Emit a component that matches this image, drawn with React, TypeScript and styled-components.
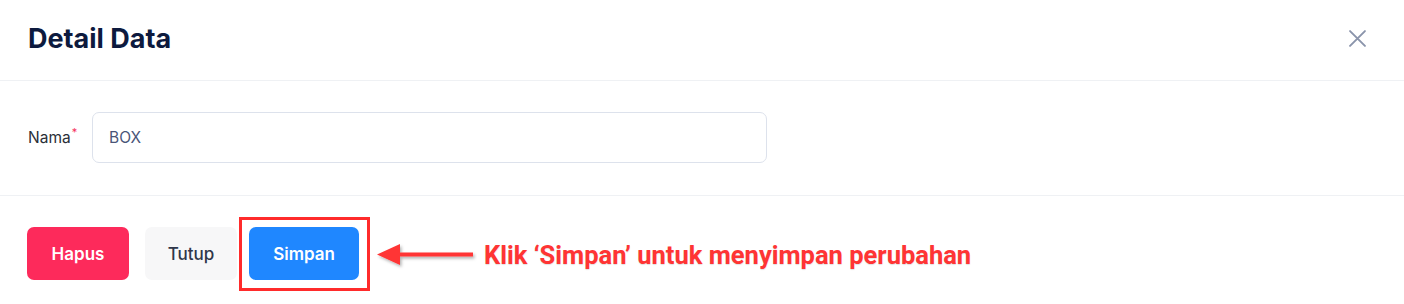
import styled, { createGlobalStyle } from "styled-components";

const GlobalStyle = createGlobalStyle`
  html, body {
    margin: 0;
    padding: 0;
    background: #ffffff;
  }
  body {
    font-family: Inter, "Noto Sans", sans-serif;
  }
`;

const Modal = styled.div`
  width: 1404px;
  height: 304px;
  background: #ffffff;
  display: flex;
  flex-direction: column;
`;

const Header = styled.div`
  height: 81px;
  box-sizing: border-box;
  padding: 0 38px 3px 28px;
  display: flex;
  align-items: center;
  justify-content: space-between;
  border-bottom: 1px solid #eff1f4;
`;

const Title = styled.h2`
  margin: 0;
  font-size: 27px;
  font-weight: 700;
  color: #0d1a3e;
`;

const CloseButton = styled.button`
  border: none;
  background: none;
  padding: 0;
  width: 18px;
  height: 18px;
  display: flex;
  align-items: center;
  justify-content: center;
  cursor: pointer;
`;

const Body = styled.div`
  padding: 31px 28px 32px 28px;
  border-bottom: 1px solid #eff1f4;
`;

const Field = styled.div`
  display: flex;
  align-items: center;
`;

const Label = styled.label`
  width: 64px;
  font-size: 15.5px;
  color: #2b2f38;
  display: flex;
  align-items: flex-start;
`;

const Required = styled.span`
  color: #f5325c;
  font-size: 11px;
  margin-left: 1px;
  margin-top: -3px;
`;

const Input = styled.input`
  width: 675px;
  height: 51px;
  box-sizing: border-box;
  border: 1px solid #dde2ec;
  border-radius: 7px;
  padding: 0 16px;
  font-family: Inter, "Noto Sans", sans-serif;
  font-size: 15.5px;
  color: #4a5578;
  outline: none;
`;

const Footer = styled.div`
  padding: 31px 27px 0 27px;
  display: flex;
  align-items: center;
`;

const Button = styled.button<{ $variant: "danger" | "plain" | "primary" }>`
  height: 53px;
  border: none;
  border-radius: 7px;
  font-family: Inter, "Noto Sans", sans-serif;
  font-size: 17px;
  font-weight: ${(p) => (p.$variant === "plain" ? 500 : 600)};
  cursor: pointer;
  background: ${(p) =>
    p.$variant === "danger" ? "#fd2a5b" : p.$variant === "primary" ? "#1f87ff" : "#f7f7f8"};
  color: ${(p) => (p.$variant === "plain" ? "#2f364a" : "#ffffff")};
`;

const Hapus = styled(Button)`
  width: 102px;
`;

const Tutup = styled(Button)`
  width: 92px;
  margin-left: 16px;
`;

const Simpan = styled(Button)`
  width: 110px;
`;

const Highlight = styled.div`
  position: relative;
  margin-left: 12px;
  display: flex;

  &::after {
    content: "";
    position: absolute;
    left: -10px;
    right: -11px;
    top: -10px;
    bottom: -11px;
    border: 3px solid #ff2b2b;
    pointer-events: none;
  }
`;

const Hint = styled.div`
  display: flex;
  align-items: center;
  margin-left: 18px;
  margin-top: 2px;
`;

const HintText = styled.span`
  font-family: Roboto, "Liberation Sans", sans-serif;
  font-size: 25.5px;
  font-weight: 700;
  color: #ff3434;
  margin-left: 7px;
  text-shadow: 0 1px 1px rgba(0, 0, 0, 0.12);
`;

export default function App() {
  return (
    <>
      <GlobalStyle />
      <Modal>
        <Header>
          <Title>Detail Data</Title>
          <CloseButton aria-label="close">
            <svg width="17" height="17" viewBox="0 0 16 16">
              <path d="M1 1 L15 15 M15 1 L1 15" stroke="#8a94ab" strokeWidth="1.8" strokeLinecap="round" />
            </svg>
          </CloseButton>
        </Header>
        <Body>
          <Field>
            <Label>
              Nama<Required>*</Required>
            </Label>
            <Input defaultValue="BOX" />
          </Field>
        </Body>
        <Footer>
          <Hapus $variant="danger">Hapus</Hapus>
          <Tutup $variant="plain">Tutup</Tutup>
          <Highlight>
            <Simpan $variant="primary">Simpan</Simpan>
          </Highlight>
          <Hint>
            <svg width="100" height="30" viewBox="0 0 100 30">
              <defs>
                <filter id="arrowShadow" x="-20%" y="-50%" width="140%" height="200%">
                  <feDropShadow dx="1.5" dy="2" stdDeviation="1.5" floodColor="#000" floodOpacity="0.3" />
                </filter>
              </defs>
              <g filter="url(#arrowShadow)">
                <rect x="18" y="12.5" width="78" height="4" fill="#ff3434" />
                <polygon points="0,14.5 23,4 23,25" fill="#ff3434" />
              </g>
            </svg>
            <HintText>Klik ‘Simpan’ untuk menyimpan perubahan</HintText>
          </Hint>
        </Footer>
      </Modal>
    </>
  );
}
